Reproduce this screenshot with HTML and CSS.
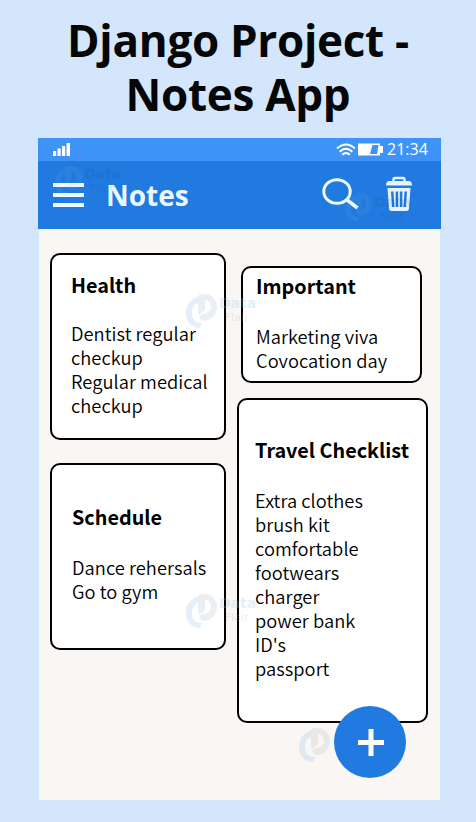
FILE: index.html
```html
<!DOCTYPE html>
<html lang="en">
<head>
<meta charset="utf-8">
<title>Django Project - Notes App</title>
<link rel="stylesheet" href="styles.css">
</head>
<body>
<svg width="0" height="0" class="defs">
  <symbol id="mark" viewBox="0 0 32 36">
    <path d="M13 3.500C5 6 0 13 1 22C2 30 7 35 15 35L17 30C11 30 7 27 7 20C7 14 10 11 13 9.500V21L18 16V2Z" fill="#8fc1ee"/>
    <path d="M14 1H19C27 1 32 7 32 14C32 22 26 28 17 28L14 24L17 21C23 21 26 18 26 14C26 10 23 7 20 7V17L14 22Z" fill="#b4bdc6"/>
  </symbol>
</svg>
<h1 class="title"><span class="title-a">Django Project -</span><span class="title-b">Notes App</span></h1>
<main class="app">
  <header>
    <div class="status">
      <svg class="signal" width="18" height="14" viewBox="0 0 18 14" fill="#fff"><path d="M0 8h3.200v5H0zM4.500 5.500h3.200v7.500H4.500zM9 3h3.200v10H9zM13.500 0h3.500v13h-3.500z"/></svg>
      <svg class="wifi" width="20" height="14" viewBox="0 0 20 14" fill="none" stroke="#fff" stroke-width="2"><path d="M1 5.500Q10-2.600 19 5.500M3.600 8.800Q10 2.600 16.400 8.800M6.200 11.800Q10 8 13.800 11.800"/></svg>
      <svg class="battery" width="25" height="13" viewBox="0 0 25 13"><path d="M0 .5h22v2.500H25v7h-3v2.500H0z" fill="#fff"/><path d="M14.500 2H20.500L19 11H12z" fill="#3f93f6"/></svg>
      <span class="clock">21:34</span>
    </div>
    <div class="toolbar">
      <div class="menu"><i></i><i></i><i></i></div>
      <span class="heading">Notes</span>
      <svg class="search" width="37" height="34" viewBox="0 0 37 34" fill="none" stroke="#effaff"><ellipse cx="15" cy="14.500" rx="13.200" ry="11.800" stroke-width="3"/><path d="M24.500 22.500L35.500 31" stroke-width="3.500"/></svg>
      <svg class="trash" width="26" height="36" viewBox="0 0 26 36"><path d="M7.500 5.500V3.500Q7.500 2 9 2H17Q18.500 2 18.500 3.500V5.500" fill="none" stroke="#e6f3fd" stroke-width="2.400"/><path d="M3 5H23Q26 5 26 9.500H0Q0 5 3 5Z" fill="#e6f3fd"/><path d="M1.500 12H24.500L23 32.500Q22.700 35 20.500 35H5.500Q3.300 35 3 32.500Z" fill="#e6f3fd"/><path d="M6.200 15.500L7.300 31M10.900 15.500V31M15.100 15.500V31M19.800 15.500L18.700 31" stroke="#217ae0" stroke-width="2.500"/></svg>
    </div>
  </header>
  <div class="board">
    <div class="column left">
      <article class="note health"><h2>Health</h2><p>Dentist regular<br>checkup<br>Regular medical<br>checkup</p></article>
      <article class="note schedule"><h2>Schedule</h2><p>Dance rehersals<br>Go to gym</p></article>
    </div>
    <div class="column right">
      <article class="note important"><h2>Important</h2><p>Marketing viva<br>Covocation day</p></article>
      <article class="note travel"><h2>Travel Checklist</h2><p>Extra clothes<br>brush kit<br>comfortable<br>footwears<br>charger<br>power bank<br>ID's<br>passport</p></article>
    </div>
  </div>
  <button class="add" aria-label="Add note"><svg width="26" height="27" viewBox="0 0 26 27"><path d="M0 13.500H26M13 0V27" stroke="#fff" stroke-width="5"/></svg></button>
  <div class="brand w1"><svg width="32" height="36"><use href="#mark"/></svg><span><b>Data</b><em>Flair</em></span></div>
  <div class="brand w2"><svg width="32" height="36"><use href="#mark"/></svg><span><b>Data</b><em>Flair</em></span></div>
  <div class="brand w3"><svg width="32" height="36"><use href="#mark"/></svg></div>
  <div class="brand dark w4"><svg width="28" height="34"><use href="#mark"/></svg><span><b>Data</b><em>Flair</em></span></div>
  <div class="brand dark w5"><svg width="28" height="30"><use href="#mark"/></svg><span><b>Data</b><em>Flair</em></span></div>
</main>
</body>
</html>
```
FILE: styles.css
```css
* { box-sizing: border-box; }
body { margin: 0; width: 476px; height: 822px; overflow: hidden; background: #d3e6fc; color: #000; font-family: "Noto Sans CJK SC", "Open Sans", sans-serif; }
.defs { position: absolute; }
.title { display: flex; flex-direction: column; align-items: center; margin: 0; height: 138px; padding-top: 13px; font: 700 44px/54px "Open Sans", sans-serif; white-space: nowrap; color: #050607; }
.title-a, .title-b { letter-spacing: -0.3px; }
.app { position: relative; width: 403px; height: 662px; margin-left: 38px; }
header { height: 91px; background: #217ae0; color: #fff; }
.status { display: flex; align-items: center; height: 23px; padding-left: 15px; background: #3f93f6; }
.wifi { margin-left: 265px; }
.battery { margin-left: 2px; }
.clock { margin-left: 4px; font: 400 16px/23px "Open Sans", sans-serif; }
.toolbar { display: flex; align-items: center; height: 68px; padding-left: 15px; }
.menu { display: flex; flex-direction: column; gap: 6px; width: 31px; }
.menu i { height: 4px; background: #effaff; }
.heading { width: 84px; margin-left: 22px; font: 700 28px/40px "Open Sans", sans-serif; color: #e9f8ff; }
.search { margin: 0 0 2px 132px; }
.trash { margin: 0 0 2px 27px; }
.board { display: flex; align-items: flex-start; width: 401px; height: 571px; margin-left: 1px; background: #faf6f3; }
.left { padding: 24px 0 0 11px; }
.right { padding: 37px 0 0 11px; }
.note { border: 2px solid #000; border-radius: 10px; background: #fff; font-size: 18.300px; line-height: 24px; white-space: nowrap; }
.note h2 { margin: 0; font-size: 19.800px; line-height: 24px; font-weight: 700; }
.note p { margin: 0; font-weight: 350; letter-spacing: 0.050px; }
.health { width: 176px; height: 187px; padding: 18px 0 0 19px; }
.health p { margin-top: 24px; }
.schedule { width: 176px; height: 187px; margin-top: 23px; padding: 40px 0 0 20px; }
.schedule p { margin-top: 26px; }
.important { width: 181px; height: 117px; margin-left: 4px; padding: 6px 0 0 13px; }
.important p { margin-top: 26px; }
.travel { width: 191px; height: 325px; margin-top: 15px; padding: 38px 0 0 16px; }
.travel p { margin-top: 26px; }
.add { position: absolute; left: 296px; top: 568px; display: flex; align-items: center; justify-content: center; width: 72px; height: 72px; padding: 0 0 0 2px; border: 0; border-radius: 50%; background: #217ae0; }
.brand { position: absolute; display: flex; gap: 2px; opacity: .24; font-family: "DejaVu Sans", sans-serif; color: #8fc1ee; pointer-events: none; }
.brand span { display: flex; flex-direction: column; padding-top: 2px; }
.brand b { font-size: 14px; line-height: 16px; }
.brand em { margin-left: 6px; font-style: normal; font-size: 11px; line-height: 13px; color: #aab3bc; }
.w1 { left: 147px; top: 155px; }
.w2 { left: 147px; top: 455px; }
.w3 { left: 260px; top: 589px; }
.dark { opacity: .09; }
.dark b, .dark em { color: #062f68; }
.w4 { left: 16px; top: 26px; }
.w5 { left: 306px; top: 54px; }
```
